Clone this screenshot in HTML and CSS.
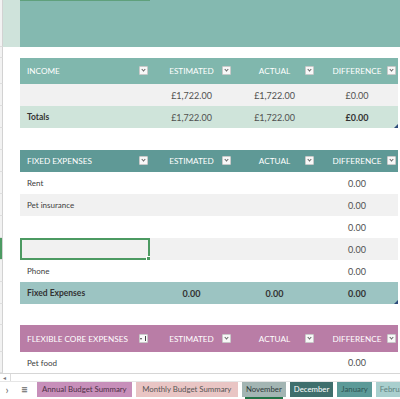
FILE: index.html
```html
<!DOCTYPE html>
<html lang="en">
<head>
    <meta charset="UTF-8">
    <meta name="viewport" content="width=device-width, initial-scale=1.0">
    <title>Family Budget</title>
    <link rel="stylesheet" href="styles.css">
</head>
<body>
    <div class="sheet">
        <div class="row h47">
            <span class="rh"></span><span class="cell mint"></span><div class="cell banner"></div>
        </div>
        <div class="row h11"><span class="rh"></span></div>

        <div class="row h26 income">
            <span class="rh"></span><span class="cell"></span>
            <div class="cell hd first">INCOME<b class="dd"></b></div>
            <div class="cell hd">ESTIMATED<b class="dd"></b></div>
            <div class="cell hd">ACTUAL<b class="dd"></b></div>
            <div class="cell hd">DIFFERENCE<b class="dd"></b></div>
        </div>
        <div class="row h22 band">
            <span class="rh"></span><span class="cell"></span>
            <div class="cell first"></div>
            <div class="cell num">£1,722.00</div>
            <div class="cell num">£1,722.00</div>
            <div class="cell num">£0.00</div>
        </div>
        <div class="row h22 total income-total">
            <span class="rh"></span><span class="cell"></span>
            <div class="cell first">Totals</div>
            <div class="cell num light">£1,722.00</div>
            <div class="cell num light">£1,722.00</div>
            <div class="cell num corner">£0.00</div>
        </div>
        <div class="row h22"><span class="rh"></span></div>

        <div class="row h22 fixed">
            <span class="rh"></span><span class="cell"></span>
            <div class="cell hd first">FIXED EXPENSES<b class="dd"></b></div>
            <div class="cell hd">ESTIMATED<b class="dd"></b></div>
            <div class="cell hd">ACTUAL<b class="dd"></b></div>
            <div class="cell hd">DIFFERENCE<b class="dd"></b></div>
        </div>
        <div class="row h22">
            <span class="rh"></span><span class="cell"></span>
            <div class="cell first">Rent</div><div class="cell"></div><div class="cell"></div><div class="cell num">0.00</div>
        </div>
        <div class="row h22 band">
            <span class="rh"></span><span class="cell"></span>
            <div class="cell first">Pet insurance</div><div class="cell"></div><div class="cell"></div><div class="cell num">0.00</div>
        </div>
        <div class="row h22">
            <span class="rh"></span><span class="cell"></span>
            <div class="cell first"></div><div class="cell"></div><div class="cell"></div><div class="cell num">0.00</div>
        </div>
        <div class="row h22 band">
            <span class="rh sel"></span><span class="cell"></span>
            <div class="cell first active"></div><div class="cell"></div><div class="cell"></div><div class="cell num">0.00</div>
        </div>
        <div class="row h22">
            <span class="rh"></span><span class="cell"></span>
            <div class="cell first">Phone</div><div class="cell"></div><div class="cell"></div><div class="cell num">0.00</div>
        </div>
        <div class="row h22 total fixed-total">
            <span class="rh"></span><span class="cell"></span>
            <div class="cell first">Fixed Expenses</div>
            <div class="cell num">0.00</div>
            <div class="cell num">0.00</div>
            <div class="cell num corner">0.00</div>
        </div>
        <div class="row h21"><span class="rh"></span></div>

        <div class="row h27 flexible">
            <span class="rh"></span><span class="cell"></span>
            <div class="cell hd first">FLEXIBLE CORE EXPENSES<b class="dd sort"></b></div>
            <div class="cell hd">ESTIMATED<b class="dd"></b></div>
            <div class="cell hd">ACTUAL<b class="dd"></b></div>
            <div class="cell hd">DIFFERENCE<b class="dd"></b></div>
        </div>
        <div class="row h21">
            <span class="rh"></span><span class="cell"></span>
            <div class="cell first">Pet food</div><div class="cell"></div><div class="cell"></div><div class="cell num">0.00</div>
        </div>
    </div>

    <div class="hscroll"><span class="arrow">&#9666;</span></div>

    <div class="tabbar">
        <span class="nav">&#8250;</span>
        <span class="nav menu">&#8801;</span>
        <span class="tab summary annual">Annual Budget Summary</span>
        <span class="tab summary monthly">Monthly Budget Summary</span>
        <span class="tab november current">November</span>
        <span class="tab december">December</span>
        <span class="tab january">January</span>
        <span class="tab february">February</span>
    </div>
</body>
</html>
```

FILE: styles.css
```css
body {
    margin: 0;
    width: 400px;
    height: 399px;
    overflow: hidden;
    background: #ffffff;
    font-family: Lato, "Open Sans", sans-serif;
    font-size: 8px;
    color: #404040;
}

.sheet {
    height: 373px;
}

.row {
    display: grid;
    grid-template-columns: 3px 17px 130px 83px 83px 82px 1fr;
}
.h47 { height: 47px; }
.h11 { height: 11px; }
.h21 { height: 21px; }
.h22 { height: 22px; }
.h26 { height: 26px; }
.h27 { height: 27px; }

.rh {
    background: #f2f2f2;
    border-right: 1px solid #d2d2d2;
    border-bottom: 1px solid #dedede;
    box-sizing: border-box;
}
.rh.sel {
    background: #4c9a62;
}

.cell {
    position: relative;
    display: flex;
    align-items: center;
    justify-content: center;
    white-space: nowrap;
}
.cell.first {
    justify-content: flex-start;
    padding-left: 7px;
}

.mint {
    background: #cfe3db;
}
.banner {
    grid-column: 3 / -1;
    background: linear-gradient(#5fa07c, #5fa07c) no-repeat 0 0 / 130px 1px, #84b9b0;
}

/* table headers */
.hd {
    color: #ffffff;
    font-size: 8.2px;
}
.income .hd { background: #80b7ad; }
.fixed .hd { background: #5f9996; }
.flexible .hd { background: #b97da6; }

.dd {
    position: absolute;
    right: 2px;
    top: 50%;
    width: 9px;
    height: 9px;
    margin-top: -5px;
    box-sizing: border-box;
    background: #f8f8f8;
    border: 1px solid #c9c9c9;
    border-radius: 1px;
}
.dd::after {
    content: "";
    position: absolute;
    left: 2px;
    top: 1px;
    width: 2px;
    height: 2px;
    border-right: 1px solid #666;
    border-bottom: 1px solid #666;
    transform: rotate(45deg);
}
.dd.sort::after {
    left: 0;
    top: 3px;
    width: 0;
    height: 0;
    border: 1.5px solid transparent;
    border-top: 2px solid #444;
    transform: none;
}
.dd.sort::before {
    content: "";
    position: absolute;
    left: 5px;
    top: 1px;
    width: 1px;
    height: 5px;
    background: #444;
}

/* body rows */
.band .cell:nth-child(n+3) { background: #f1f1f1; }
.income-total .cell:nth-child(n+3) { background: #cfe4da; }
.fixed-total .cell:nth-child(n+3) { background: #9cc4c2; }

.num {
    font-size: 9px;
    color: #505050;
}
.total .first,
.total .num {
    font-weight: bold;
    color: #333333;
}
.total .first {
    font-size: 8.5px;
}
.total .num.light {
    font-weight: normal;
    color: #505050;
}

.corner::after {
    content: "";
    position: absolute;
    right: 0;
    bottom: 0;
    border: 2px solid transparent;
    border-right-color: #2d4b7a;
    border-bottom-color: #2d4b7a;
}

.active {
    box-sizing: border-box;
    border: 2px solid #4c9a62;
}
.active::after {
    content: "";
    position: absolute;
    right: -3px;
    bottom: -3px;
    width: 3px;
    height: 3px;
    background: #4c9a62;
    border: 1px solid #ffffff;
}

/* bottom bars */
.hscroll {
    height: 9px;
    border-top: 1px solid #d6d6d6;
    border-bottom: 1px solid #e6e6e6;
    box-sizing: border-box;
    display: flex;
    align-items: center;
    padding-left: 3px;
}
.arrow {
    font-size: 6px;
    color: #777;
    border-right: 1px solid #dcdcdc;
    padding-right: 4px;
    line-height: 7px;
}

.tabbar {
    height: 17px;
    display: flex;
    align-items: flex-start;
    gap: 4px;
    overflow: hidden;
    background: #ffffff;
}
.tabbar > span {
    flex-shrink: 0;
}
.nav {
    width: 14px;
    text-align: center;
    font-size: 11px;
    line-height: 15px;
    color: #666;
}
.nav.menu {
    width: 13px;
    font-size: 12px;
    margin-right: 2px;
}
.tab {
    position: relative;
    height: 15px;
    line-height: 15px;
    padding: 0 4px;
    font-size: 7.8px;
    white-space: nowrap;
    color: #444;
}
.tab.summary {
    padding: 0 5px;
}
.tab.monthly {
    padding: 0 6.5px;
}
.annual { background: #c78fba; color: #4d3046; }
.monthly { background: #e9c5c4; color: #555; }
.november { background: #a3b5b3; color: #2f3a39; }
.december { background: #3f6f6d; color: #ffffff; }
.january { background: #5c9a98; color: #2f5452; }
.february { background: #a9cfce; color: #5e7f7e; }
.current::after {
    content: "";
    position: absolute;
    left: 3px;
    right: 3px;
    bottom: -2px;
    height: 2px;
    background: #217346;
}
```
